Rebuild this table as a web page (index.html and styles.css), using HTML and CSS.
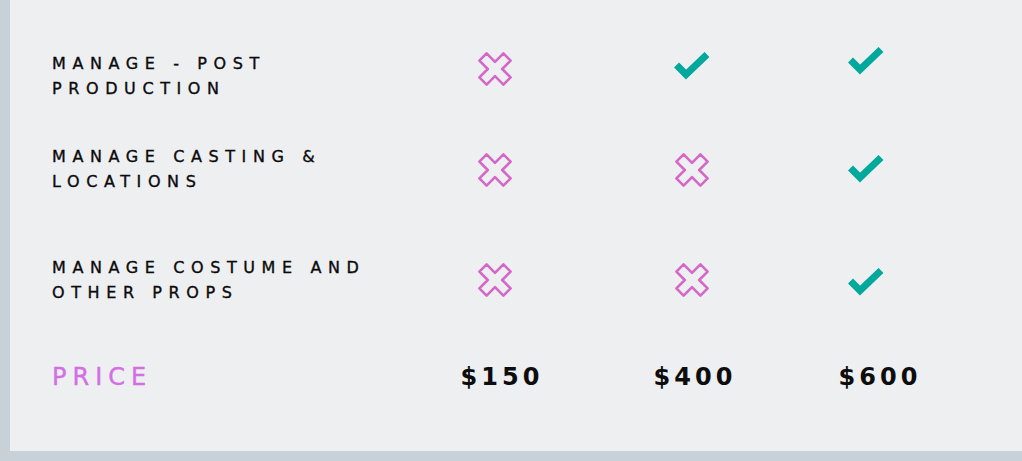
FILE: index.html
```html
<!DOCTYPE html>
<html lang="en">
<head>
<meta charset="utf-8">
<title>Pricing comparison</title>
<link rel="stylesheet" href="styles.css">
</head>
<body>
<svg width="0" height="0" class="defs" aria-hidden="true">
  <defs>
    <symbol id="cross" viewBox="0 0 34 34">
      <path d="M1.4 8.6 L8.6 1.4 L17 9.8 L25.4 1.4 L32.6 8.6 L24.2 17 L32.6 25.4 L25.4 32.6 L17 24.2 L8.6 32.6 L1.4 25.4 L9.8 17 Z" fill="none" stroke="#d468c8" stroke-width="2.6" stroke-linejoin="round"/>
    </symbol>
    <symbol id="check" viewBox="0 0 36 28">
      <path d="M2.5 13 L12 22.5 L33 2.5" fill="none" stroke="#00a99c" stroke-width="7" stroke-linejoin="miter" stroke-linecap="butt"/>
    </symbol>
  </defs>
</svg>
<main class="card">
  <div class="row r1">
    <div class="label">MANAGE - POST<br>PRODUCTION</div>
    <div class="cell"><svg class="x"><use href="#cross"/></svg></div>
    <div class="cell"><svg class="ok"><use href="#check"/></svg></div>
    <div class="cell"><svg class="ok up"><use href="#check"/></svg></div>
  </div>
  <div class="row r2">
    <div class="label">MANAGE CASTING &amp;<br>LOCATIONS</div>
    <div class="cell"><svg class="x"><use href="#cross"/></svg></div>
    <div class="cell"><svg class="x"><use href="#cross"/></svg></div>
    <div class="cell"><svg class="ok"><use href="#check"/></svg></div>
  </div>
  <div class="row r3">
    <div class="label">MANAGE COSTUME AND<br>OTHER PROPS</div>
    <div class="cell"><svg class="x"><use href="#cross"/></svg></div>
    <div class="cell"><svg class="x"><use href="#cross"/></svg></div>
    <div class="cell"><svg class="ok"><use href="#check"/></svg></div>
  </div>
  <div class="row price-row">
    <div class="price-label">PRICE</div>
    <div class="cell price p1">$150</div>
    <div class="cell price p2">$400</div>
    <div class="cell price p3">$600</div>
  </div>
</main>
</body>
</html>
```

FILE: styles.css
```css
* { box-sizing: border-box; }

html, body {
  margin: 0;
  padding: 0;
}

body {
  width: 1022px;
  height: 461px;
  overflow: hidden;
  font-family: "DejaVu Sans", "Liberation Sans", sans-serif;
  color: #111;
}

.defs {
  position: absolute;
  width: 0;
  height: 0;
}

.card {
  height: 461px;
  background: #eeeff1;
  border-left: 10px solid #c9d1d8;
  border-bottom: 10px solid #c9d1d8;
  padding: 51px 0 0 42px;
  display: flex;
  flex-direction: column;
}

.row {
  display: grid;
  grid-template-columns: 348px 190px 204px 144px;
  align-items: start;
}

.r2 { margin-top: 43px; }
.r3 { margin-top: 61px; }
.price-row { margin-top: 57px; }

.label {
  font-size: 16px;
  line-height: 25px;
  letter-spacing: 6.6px;
  font-weight: normal;
  color: #0a0a0a;
  white-space: nowrap;
  -webkit-text-stroke: 0.35px #0a0a0a;
}

.cell {
  display: flex;
  justify-content: center;
}

.x {
  width: 34px;
  height: 34px;
}

.ok {
  width: 36px;
  height: 28px;
}

.r1 .x, .r1 .ok { margin-top: 1px; }
.r1 .ok.up { margin-top: -4px; }
.r2 .x { margin-top: 9px; }
.r2 .ok { margin-top: 11px; }
.r3 .x { margin-top: 8px; }
.r3 .ok { margin-top: 13px; }

.price-label {
  font-size: 24px;
  line-height: 30px;
  letter-spacing: 6px;
  color: #d26fe4;
  -webkit-text-stroke: 0.4px #d26fe4;
}

.price {
  font-size: 24px;
  line-height: 30px;
  font-weight: bold;
  letter-spacing: 4px;
  color: #0d0d0d;
}

.p1 { padding-left: 14px; }
.p2 { padding-left: 6px; }
.p3 { padding-left: 28px; }
```
